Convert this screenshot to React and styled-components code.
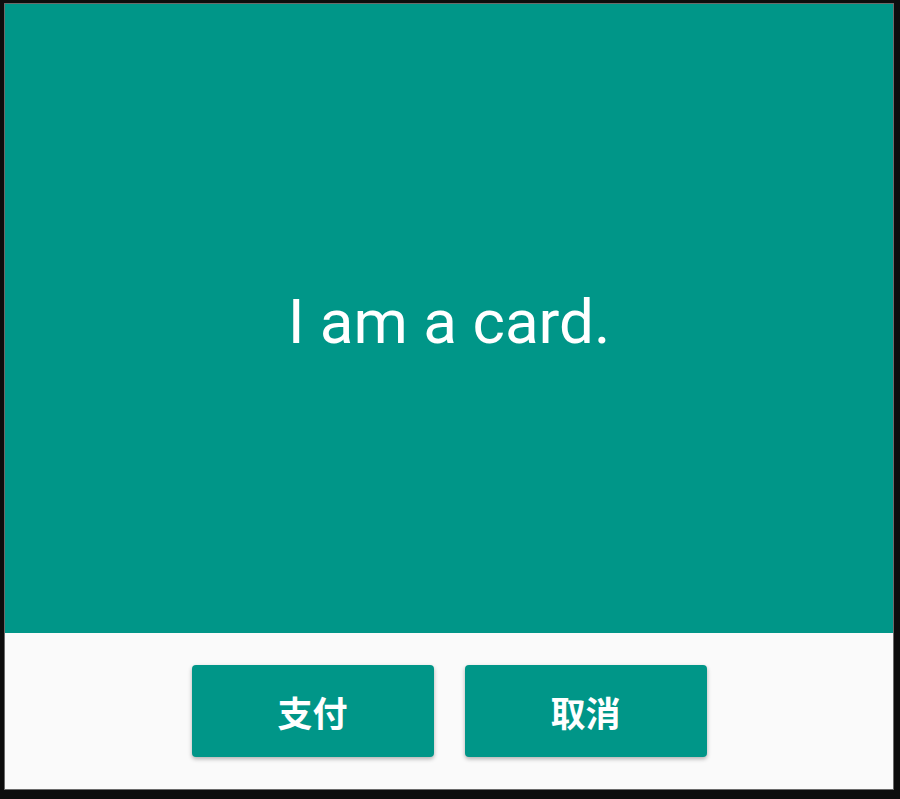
import React from 'react';
import styled, { createGlobalStyle } from 'styled-components';

const Global = createGlobalStyle`
  html, body {
    margin: 0;
    padding: 0;
    background: #0d0d0d;
  }
  body {
    font-family: Roboto, "Noto Sans CJK SC", sans-serif;
  }
`;

const Frame = styled.div`
  width: 900px;
  height: 799px;
  box-sizing: border-box;
  padding: 4px 7px 10px 5px;
`;

const Card = styled.div`
  height: 100%;
  display: flex;
  flex-direction: column;
  background: #fafafa;
  box-shadow: 0 0 0 1px #6b6b6b;
  overflow: hidden;
`;

const Body = styled.div`
  height: 629px;
  background: #009688;
  display: flex;
  align-items: center;
  justify-content: center;
  color: #fff;
  font-size: 62px;
  padding-top: 6px;
  box-sizing: border-box;
`;

const Actions = styled.div`
  flex: 1;
  display: flex;
  justify-content: center;
  align-items: center;
  gap: 31px;
`;

const Button = styled.button`
  width: 242px;
  height: 92px;
  border: none;
  border-radius: 4px;
  background: #009688;
  color: #fff;
  font-family: Roboto, "Noto Sans CJK SC", sans-serif;
  font-size: 35px;
  font-weight: 700;
  box-shadow: 0 2px 4px rgba(0, 0, 0, 0.3);
  cursor: pointer;
`;

export default function App() {
  return (
    <>
      <Global />
      <Frame>
        <Card>
          <Body>I am a card.</Body>
          <Actions>
            <Button>支付</Button>
            <Button>取消</Button>
          </Actions>
        </Card>
      </Frame>
    </>
  );
}
